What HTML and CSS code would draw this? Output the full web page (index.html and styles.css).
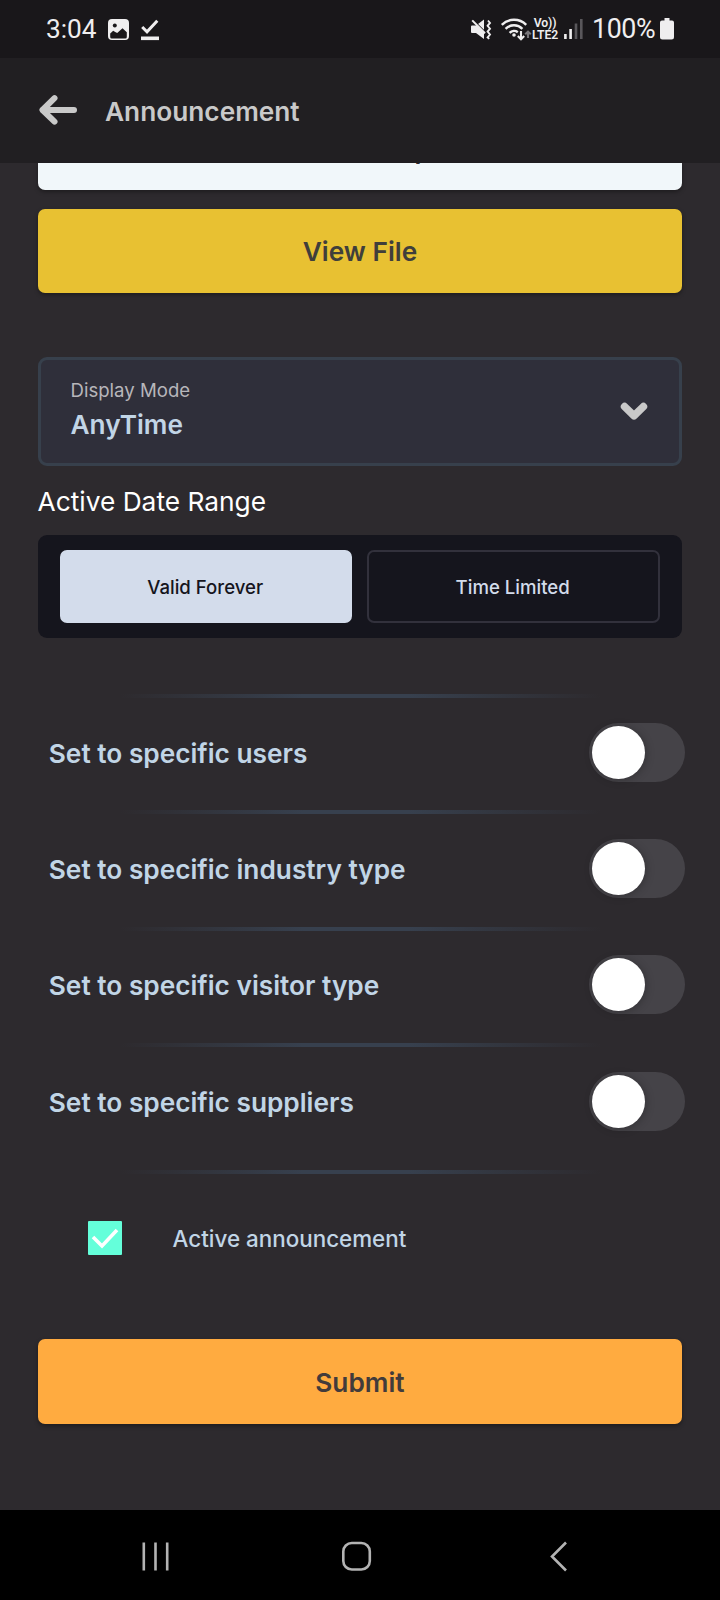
FILE: index.html
```html
<!DOCTYPE html>
<html lang="en">
<head>
<meta charset="utf-8">
<title>Announcement</title>
<link rel="stylesheet" href="styles.css">
</head>
<body>
<div class="screen">
  <div class="status">
    <span class="clock">3:04</span>
    <svg class="ic-image" width="21" height="21" viewBox="0 0 21 21"><rect width="21" height="21" rx="4" fill="#efeeef"/><circle cx="6.800" cy="6.600" r="2" fill="#19171a"/><path d="M2.200 14.500l3-2.700 2 1.200 2 1 5.300-4.700 4.300 4v4.700a1.500 1.500 0 0 1-1.500 1.500H3.700a1.500 1.500 0 0 1-1.500-1.500z" fill="#19171a"/></svg>
    <svg class="ic-done" width="18" height="22" viewBox="0 0 18 22" fill="none" stroke="#efeeef"><path d="M1.200 8l4.800 4.800L16.300 1.800" stroke-width="3"/><path d="M0 19.300h18" stroke-width="3.600"/></svg>
    <div class="status-right">
      <svg class="ic-mute" width="21" height="22" viewBox="0 0 21 22"><path d="M1 6.500h4l8-6v19.500l-8-6H1a1 1 0 0 1-1-1V7.500a1 1 0 0 1 1-1z" fill="#efeeef"/><path d="M0-.800l16 16" stroke="#19171a" stroke-width="2"/><path d="M1.200 1.400L14 14.200" stroke="#efeeef" stroke-width="2"/><path d="M17 1.500l2 2.400-2.400 2.900 2.400 2.900-2.400 2.900 2.400 2.900-2.400 2.900 1.600 1.500" fill="none" stroke="#efeeef" stroke-width="1.900"/></svg>
      <svg class="ic-wifi" width="31" height="24" viewBox="0 0 31 24" fill="none" stroke="#efeeef" stroke-width="2.500"><path d="M.800 6.800a17.500 17.500 0 0 1 24.400 0M4.600 10.800a12 12 0 0 1 16.800 0M8.600 14.800a6.500 6.500 0 0 1 8.200-.600"/><circle cx="13" cy="17" r="1.800" fill="#efeeef" stroke="none"/><path d="M20 13v8.200M16.800 18l3.200 3.200 3.200-3.200" stroke-width="2.100"/><path d="M27 20v-6.300M24.200 16.300l2.800-2.700 2.800 2.700" stroke="#777579" stroke-width="2.100"/></svg>
      <span class="volte"><span>Vo))</span><span>LTE2</span></span>
      <svg class="ic-signal" width="19" height="20" viewBox="0 0 19 20"><path d="M1.400 15v5M6.600 10v10" stroke="#efeeef" stroke-width="2.600"/><path d="M12 4.500V20M17.300 0v20" stroke="#59575b" stroke-width="2.600"/></svg>
      <span class="percent">100%</span>
      <svg class="ic-battery" width="14" height="22" viewBox="0 0 14 22"><path d="M4.500 0h5v2.500H12a2 2 0 0 1 2 2V19a2.500 2.500 0 0 1-2.500 2.500h-9A2.500 2.500 0 0 1 0 19V4.500a2 2 0 0 1 2-2h2.500z" fill="#efeeef"/></svg>
    </div>
  </div>
  <header class="header">
    <svg width="38" height="31" viewBox="0 0 38 31" fill="none" stroke="#c9c9c9" stroke-linecap="round" stroke-linejoin="round"><path d="M4 15h31" stroke-width="6"/><path d="M15.500 3.200L3.500 15l12 11.600" stroke-width="6"/></svg>
    <h1>Announcement</h1>
  </header>
  <main class="content">
    <div class="upload"><span>Select file to upload</span></div>
    <button class="btn view">View File</button>
    <div class="select">
      <div class="select-text"><span class="select-label">Display Mode</span><span class="select-value">AnyTime</span></div>
      <svg width="28" height="19" viewBox="0 0 28 19" fill="none" stroke="#c9c9c9" stroke-width="7.600" stroke-linecap="round" stroke-linejoin="round"><path d="M4.600 4.600L14 13.800l9.400-9.200"/></svg>
    </div>
    <h2>Active Date Range</h2>
    <div class="segment"><button class="seg on">Valid Forever</button><button class="seg">Time Limited</button></div>
    <div class="rows">
      <div class="rule"></div>
      <div class="row"><span>Set to specific users</span><div class="toggle"><i></i></div></div>
      <div class="rule"></div>
      <div class="row"><span>Set to specific industry type</span><div class="toggle"><i></i></div></div>
      <div class="rule"></div>
      <div class="row"><span>Set to specific visitor type</span><div class="toggle"><i></i></div></div>
      <div class="rule"></div>
      <div class="row last"><span>Set to specific suppliers</span><div class="toggle"><i></i></div></div>
      <div class="rule"></div>
    </div>
    <div class="check"><svg width="34" height="34" viewBox="0 0 34 34"><rect width="34" height="34" rx="1" fill="#64ffda"/><path d="M5 16l9 9L29 9" fill="none" stroke="#fff" stroke-width="3.600"/></svg><span>Active announcement</span></div>
    <button class="btn submit">Submit</button>
  </main>
  <nav class="nav">
    <svg width="28" height="30" viewBox="0 0 28 30" stroke="#b3b3b3" stroke-width="2.600"><path d="M1.800 .500v28M13.500 .500v28M25.200 .500v28"/></svg>
    <svg width="30" height="30" viewBox="0 0 30 30" fill="none" stroke="#b3b3b3" stroke-width="2.600"><rect x="1.300" y="1" width="26.500" height="26.500" rx="8.500"/></svg>
    <svg width="18" height="30" viewBox="0 0 18 30" fill="none" stroke="#b3b3b3" stroke-width="2.600"><path d="M16 .500L2 14.500l14 14"/></svg>
  </nav>
</div>
</body>
</html>
```

FILE: styles.css
```css
* { box-sizing: border-box; }
body { margin: 0; background: #2d2a2e; }
button { border: 0; padding: 0; font: inherit; }
svg { display: block; flex: none; overflow: visible; }
.screen { width: 720px; height: 1600px; display: flex; flex-direction: column; background: #2d2a2e; font-family: Inter, sans-serif; white-space: nowrap; overflow: hidden; }
.status { height: 58px; flex: none; background: #19171a; color: #efeeef; display: flex; align-items: flex-start; padding: 0 46px; font-family: Roboto, sans-serif; }
.clock { width: 62px; font-size: 26.2px; line-height: 32px; margin-top: 13px; }
.ic-image { margin-top: 19px; }
.ic-done { margin: 19px 0 0 12px; }
.status-right { display: flex; margin-left: auto; }
.ic-mute { margin: 19px 9px 0 0; }
.ic-wifi { margin: 18px 0 0 0; }
.volte { width: 28px; margin: 18px 5px 0 -1px; display: flex; flex-direction: column; align-items: center; font-size: 12.2px; font-weight: 600; line-height: 11.5px; letter-spacing: -0.1px; }
.ic-signal { margin: 19px 9px 0 0; }
.percent { width: 66px; font-size: 26.8px; line-height: 32px; margin-top: 13px; letter-spacing: -0.4px; }
.ic-battery { margin: 18px 0 0 2px; }
.header { height: 105px; flex: none; background: #211f22; display: flex; align-items: center; gap: 28px; padding: 0 39px; color: #c9c9c9; }
.header svg { margin-top: -1px; }
h1 { margin: 2px 0 0; font-size: 26.25px; line-height: 32px; font-weight: 600; }
.content { flex: 1; display: flex; flex-direction: column; padding: 0 37.600px 0 37.500px; }
.upload { height: 27px; flex: none; background: #f1f7fa; border-radius: 0 0 7px 7px; box-shadow: 0 2px 4px rgba(0,0,0,.35); overflow: hidden; display: flex; justify-content: center; align-items: flex-start; color: #2d2a2e; font-size: 26.250px; font-weight: 600; line-height: 32px; }
.upload span { margin-top: -29px; }
.btn { height: 84.500px; flex: none; border-radius: 7px; color: #423b3b; font-size: 26.250px; font-weight: 600; box-shadow: 0 2px 4px rgba(0,0,0,.35); padding-top: 1px; }
.view { margin-top: 18.700px; background: #e8c132; color: #403e3b; padding-top: 2px; }
.select { height: 109px; flex: none; margin-top: 63.800px; border: 3px solid #37404c; border-radius: 9px; background: #2f2f3a; display: flex; justify-content: space-between; align-items: flex-start; padding: 0 31px 0 30px; }
.select svg { margin-top: 42px; }
.select-text { display: flex; flex-direction: column; }
.select-label { font-size: 18.600px; line-height: 24px; margin-top: 18.500px; color: #b7b6ba; }
.select-value { font-size: 26.200px; line-height: 32px; margin-top: 6.500px; font-weight: 600; color: #c1d5e6; }
h2 { margin: 20px 0 17px; font-size: 26.300px; line-height: 32px; font-weight: 400; color: #fff; }
.segment { height: 103px; flex: none; background: #15151d; border-radius: 9px; padding: 15px 22.500px; display: grid; grid-template-columns: 1fr 1fr; gap: 15px; }
.seg { border: 2px solid #32313c; border-radius: 7px; background: transparent; color: #d3dceb; font-size: 18.600px; font-weight: 500; padding: 2px 2px 0 0; }
.seg.on { background: #d3dceb; border-color: #d3dceb; color: #15151d; }
.rows { margin: 56px -2.500px 0 11.300px; }
.rule { height: 4px; margin: 0 84px 0 71px; background: linear-gradient(90deg, transparent, #37404e 38%, #37404e 60%, transparent); }
.row { height: 112.300px; padding-bottom: 4px; display: flex; justify-content: space-between; align-items: center; color: #c1d5e6; font-size: 26.250px; font-weight: 600; line-height: 32px; }
.row span { padding-top: 3px; }
.row.last { height: 123.100px; padding-bottom: 13px; }
.toggle { width: 96px; height: 59px; border-radius: 30px; background: #454348; padding: 3px; }
.toggle i { display: block; width: 53px; height: 53px; border-radius: 50%; background: #fff; box-shadow: 1px 1px 9px rgba(0,0,0,.25); }
.check { display: flex; align-items: center; gap: 50.600px; margin: 46.600px 0 0 50.500px; color: #c1d5e6; font-size: 22.400px; font-weight: 450; line-height: 34px; }
.check span { padding-top: 1px; }
.submit { margin-top: 83.700px; background: #ffab40; }
.nav { height: 90px; flex: none; background: #000; display: grid; grid-template-columns: 200px 208px auto; padding: 32px 0 0 142px; }
```
